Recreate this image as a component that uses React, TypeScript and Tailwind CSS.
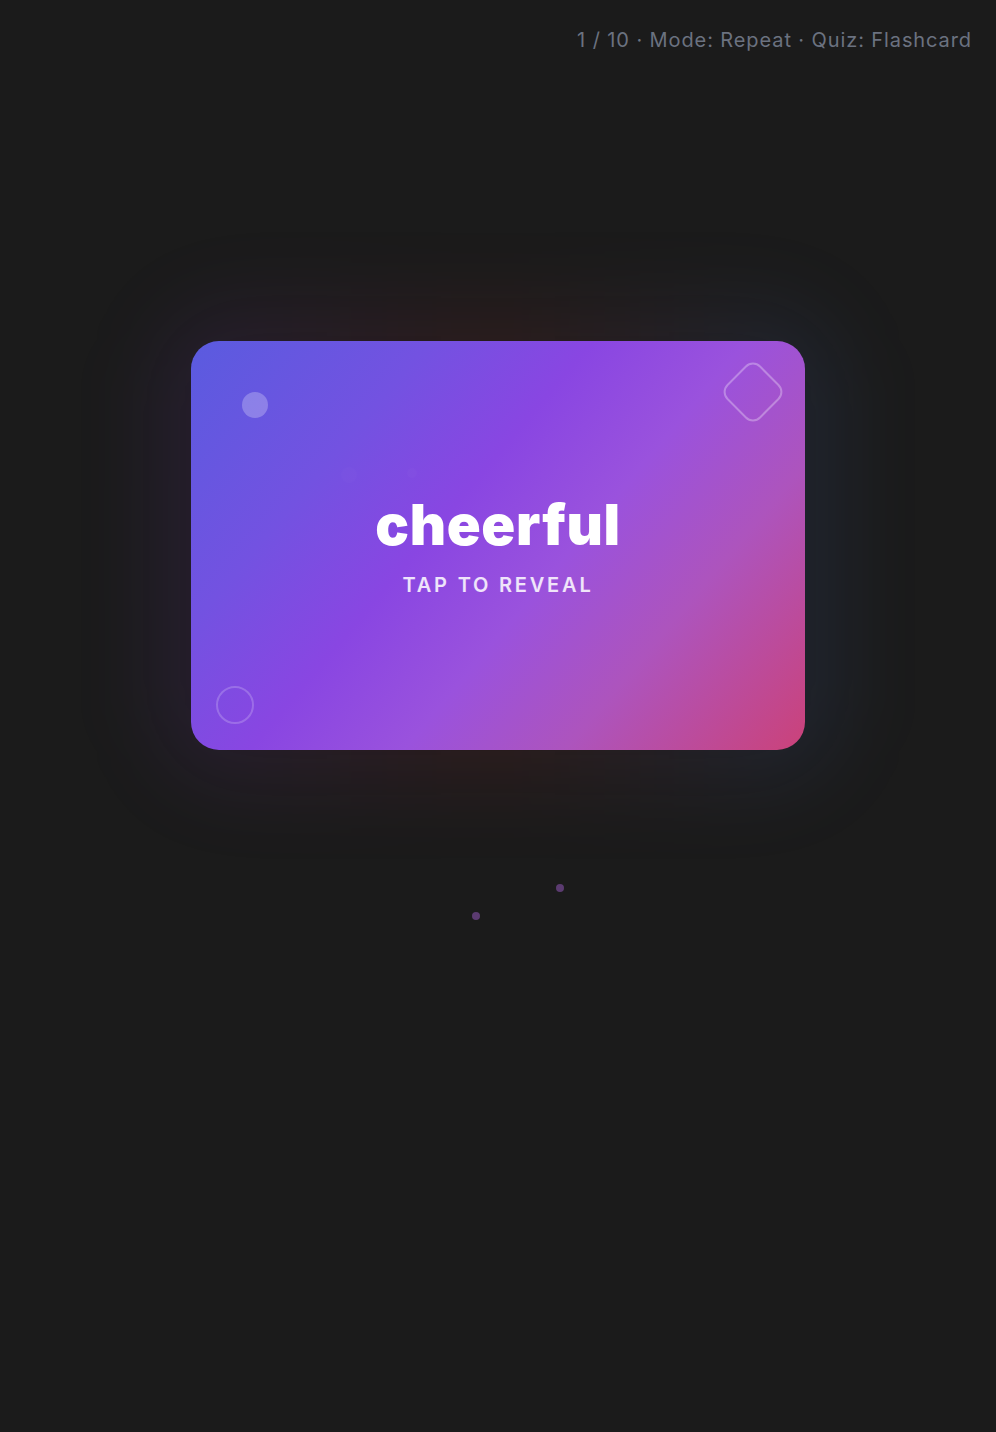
const font = { fontFamily: "Inter, 'Noto Sans', sans-serif" };

function Card() {
  return (
    <div className="relative">
      {/* soft coloured glow behind the card */}
      <div className="pointer-events-none absolute -inset-[34px] rounded-[80px] bg-[linear-gradient(90deg,rgba(124,58,237,0.10),rgba(220,38,38,0.09)_50%,rgba(59,130,246,0.10))] blur-[40px]" />
      <div className="relative flex h-[409px] w-[614px] flex-col items-center justify-center overflow-hidden rounded-[28px] bg-[linear-gradient(130deg,#5a5bdf_0%,#7352e1_25%,#8946e2_42%,#9a52dd_58%,#ad54bd_75%,#cb4279_100%)]">
        <div className="absolute left-[51px] top-[51px] h-[26px] w-[26px] rounded-full bg-white/25" />
        <div className="absolute left-[150px] top-[126px] h-[16px] w-[16px] rounded-full bg-white/[0.015]" />
        <div className="absolute left-[216px] top-[127px] h-[10px] w-[10px] rounded-full bg-white/[0.02]" />
        <div className="absolute right-[28px] top-[27px] h-[48px] w-[48px] rotate-45 rounded-[11px] border-2 border-white/30" />
        <div className="absolute bottom-[26px] left-[25px] h-[38px] w-[38px] rounded-full border-2 border-white/20" />
        <h1 className="text-[56px] font-black leading-none tracking-[0.012em] text-white">
          cheerful
        </h1>
        <p className="mt-[22px] text-[20px] font-semibold uppercase leading-none tracking-[0.14em] text-white/85">
          Tap to reveal
        </p>
      </div>
    </div>
  );
}

export default function App() {
  return (
    <div className="flex min-h-[1432px] flex-col bg-[#1b1b1b]" style={font}>
      <header className="flex justify-end px-6 pt-[26px]">
        <span className="text-[20px] leading-7 tracking-[0.045em] text-[#6b7280]">
          1 / 10 · Mode: Repeat · Quiz: Flashcard
        </span>
      </header>
      <main className="flex flex-col items-center pt-[287px]">
        <Card />
        <div className="ml-[40px] mt-[134px] flex h-[36px] gap-[76px]">
          <div className="h-[8px] w-[8px] self-end rounded-full bg-[#5b3b70]" />
          <div className="h-[8px] w-[8px] self-start rounded-full bg-[#5b3b70]" />
        </div>
      </main>
    </div>
  );
}
